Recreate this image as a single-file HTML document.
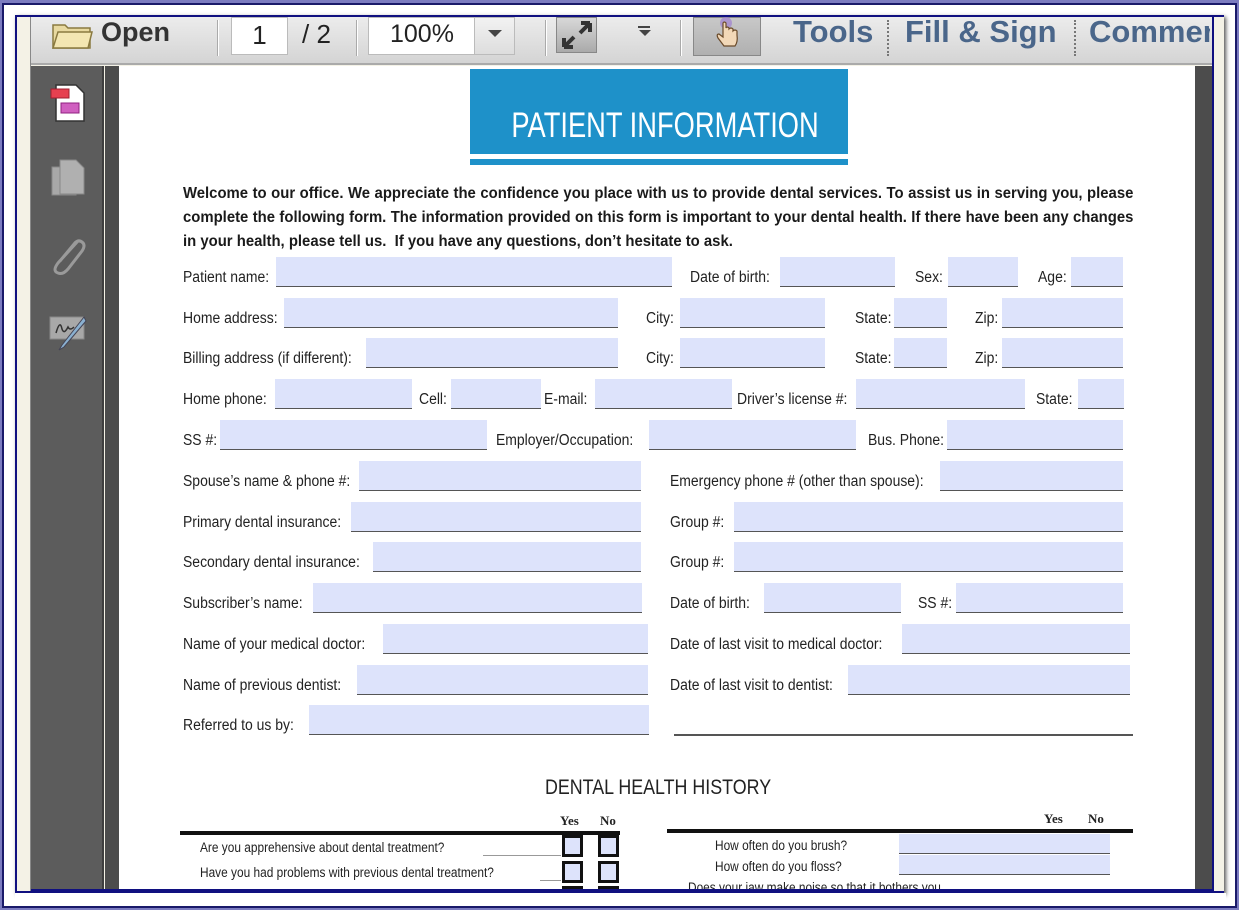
<!DOCTYPE html>
<html><head><meta charset="utf-8"><style>
*{margin:0;padding:0;box-sizing:border-box}
body{width:1239px;height:910px;overflow:hidden;background:#7c7cc0;position:relative;font-family:"Liberation Sans",sans-serif}
.a{position:absolute}
.t{position:absolute;font-size:15.5px;color:#222;white-space:nowrap;transform-origin:0 50%;transform:scaleX(.9);line-height:18px}
.f{position:absolute;background:#dde3fb;border-bottom:1.5px solid #555}
.tb{position:absolute;font-weight:bold;color:#4a668a;font-size:31px;top:14px;white-space:nowrap}
.sep{position:absolute;top:20px;width:2px;height:36px;border-left:1px solid #aaa;border-right:1px solid #fff}
.dsep{position:absolute;top:20px;height:36px;border-left:2px dotted #777}
.p{position:absolute;left:183px;width:990px;font-weight:bold;font-size:15.5px;color:#1a1a1a;text-align:justify;text-align-last:justify;white-space:nowrap;height:20px;line-height:20px;transform-origin:0 50%;transform:scaleX(.96)}
.cb{position:absolute;width:21px;height:22px;border:3px solid #111;background:#dde3fb}
.q{position:absolute;font-size:13.5px;color:#222;white-space:nowrap;transform-origin:0 50%;transform:scaleX(.88)}
</style></head><body>
<div class="a" style="left:2px;top:3px;width:1235px;height:905px;border:2px solid #1a1a6a;background:#fff"></div>
<div class="a" style="left:15px;top:15px;width:1209px;height:878px;border:2px solid #101080;background:#f4f2e6;box-shadow:2px 2px 4px #555"></div>
<!-- toolbar -->
<div class="a" style="left:31px;top:17px;width:1181px;height:48px;background:linear-gradient(#ececec,#d4d4d4);border-bottom:2px solid #aaa"></div>
<svg class="a" style="left:50px;top:17px" width="44" height="34"><path d="M3 8 h12 l3 3 h22 v20 h-37z" fill="#e8d9a0" stroke="#8a7a40" stroke-width="1.5"/><path d="M3 31 l5-16 h34 l-4 16z" fill="#f3e6b2" stroke="#8a7a40" stroke-width="1.5"/></svg>
<div class="a" style="left:101px;top:17px;font-size:27px;font-weight:bold;color:#333">Open</div>
<div class="sep" style="left:217px"></div>
<div class="a" style="left:231px;top:17px;width:57px;height:38px;background:#fff;border:1px solid #bbb;font-size:26px;text-align:center;line-height:34px;color:#222">1</div>
<div class="a" style="left:302px;top:17px;font-size:26px;color:#222;line-height:34px">/&nbsp;2</div>
<div class="sep" style="left:356px"></div>
<div class="a" style="left:368px;top:17px;width:147px;height:38px;background:#fff;border:1px solid #bbb;font-size:25px;line-height:32px;color:#222;padding-left:21px">100%</div>
<div class="a" style="left:474px;top:17px;width:41px;height:38px;background:linear-gradient(#f2f2f2,#ddd);border:1px solid #bbb"></div>
<div class="a" style="left:488px;top:30px;border-left:7px solid transparent;border-right:7px solid transparent;border-top:7px solid #444"></div>
<div class="sep" style="left:545px"></div>
<div class="a" style="left:556px;top:17px;width:41px;height:36px;background:linear-gradient(#d8d8d8,#aaa);border:1px solid #888"></div>
<svg class="a" style="left:560px;top:19px" width="34" height="32"><path d="M4 28 L14 18 M4 28 v-9 M4 28 h9" stroke="#333" stroke-width="4" fill="none"/><path d="M30 4 L20 14 M30 4 v9 M30 4 h-9" stroke="#333" stroke-width="4" fill="none"/></svg>
<div class="a" style="left:638px;top:26px;width:12px;height:2px;background:#444"></div>
<div class="a" style="left:639px;top:30px;border-left:6px solid transparent;border-right:6px solid transparent;border-top:6px solid #444"></div>
<div class="sep" style="left:680px"></div>
<div class="a" style="left:693px;top:17px;width:68px;height:39px;background:linear-gradient(#c8c8c8,#b0b0b0);border:1px solid #888"></div>
<svg class="a" style="left:711px;top:17px" width="32" height="34"><circle cx="15" cy="6" r="6" fill="#a080d0" opacity=".7"/><path d="M12 6 v14 l-4-3 q-3 0 -1 4 l6 8 h11 q3-4 2-11 v-4 q-2-2-4 0 v-2 q-2-2-4 0 v-1 q-2-2-3 0 v-5 q-2-2-3 0z" fill="#f2d8b8" stroke="#6a4a2a" stroke-width="1.2"/></svg>
<div class="tb" style="left:793px">Tools</div>
<div class="dsep" style="left:887px"></div>
<div class="tb" style="left:905px">Fill &amp; Sign</div>
<div class="dsep" style="left:1074px"></div>
<div class="a" style="left:1089px;top:14px;width:121px;overflow:hidden;font-weight:bold;color:#4a668a;font-size:31px;white-space:nowrap">Comment</div>
<!-- side -->
<div class="a" style="left:31px;top:66px;width:73px;height:824px;background:#5c5c5c;border-right:2px solid #3e3e3e"></div>
<div class="a" style="left:105px;top:66px;width:1107px;height:824px;background:#4c4c4c"></div>
<svg class="a" style="left:48px;top:82px" width="42" height="42"><path d="M8 3 h20 l8 8 v28 h-28z" fill="#fff" stroke="#333" stroke-width="1.5"/><rect x="3" y="7" width="18" height="9" fill="#e64050" stroke="#a02030"/><rect x="13" y="21" width="18" height="10" fill="#d060c0" stroke="#902080"/></svg>
<svg class="a" style="left:50px;top:157px" width="38" height="42"><rect x="2" y="10" width="24" height="28" fill="#a8a8a8" stroke="#888"/><path d="M10 3 h16 l8 8 v26 h-24z" fill="#b0b0b0" stroke="#888"/></svg>
<svg class="a" style="left:48px;top:233px" width="40" height="44"><path d="M30 8 L10 30 q-6 8 0 10 q5 2 10-4 L34 18 q4-6 0-9 q-4-3-8 2 L12 28" fill="none" stroke="#9a9a9a" stroke-width="3"/></svg>
<svg class="a" style="left:48px;top:313px" width="44" height="40"><rect x="2" y="4" width="34" height="22" fill="#a8a8a8" stroke="#888"/><path d="M8 20 q4-14 6-4 q2 6 6-2 q2 4 6 0" stroke="#333" fill="none" stroke-width="1.5"/><path d="M36 4 L14 32 l-3 5 5-3 L38 8z" fill="#8ab0d0" stroke="#445"/></svg>
<!-- page -->
<div class="a" style="left:119px;top:66px;width:1076px;height:824px;background:#fff;overflow:hidden">
<div class="a" style="left:351px;top:3px;width:378px;height:85px;background:#1e91c9"></div>
<div class="a" style="left:351px;top:93px;width:378px;height:6px;background:#1e91c9"></div>
<div class="a" style="left:349px;top:40px;width:378px;text-align:center;color:#fff;font-size:35px;white-space:nowrap"><span style="display:inline-block;transform:scaleX(.78)">PATIENT INFORMATION</span></div>
</div>
<div class="p" style="top:184px">Welcome to our office. We appreciate the confidence you place with us to provide dental services. To assist us in serving you, please</div>
<div class="p" style="top:208px">complete the following form. The information provided on this form is important to your dental health. If there have been any changes</div>
<div class="p" style="top:232px;width:auto;text-align:left;text-align-last:left">in your health, please tell us.&nbsp; If you have any questions, don’t hesitate to ask.</div>

<!-- rows -->
<div class="f" style="left:276px;top:257px;width:396px;height:30px"></div><div class="t" style="left:183px;top:269px">Patient name:</div>
<div class="f" style="left:780px;top:257px;width:115px;height:30px"></div><div class="t" style="left:690px;top:269px">Date of birth:</div>
<div class="f" style="left:948px;top:257px;width:70px;height:30px"></div><div class="t" style="left:915px;top:269px">Sex:</div>
<div class="f" style="left:1071px;top:257px;width:52px;height:30px"></div><div class="t" style="left:1038px;top:269px">Age:</div>

<div class="f" style="left:284px;top:298px;width:334px;height:30px"></div><div class="t" style="left:183px;top:310px">Home address:</div>
<div class="f" style="left:680px;top:298px;width:145px;height:30px"></div><div class="t" style="left:646px;top:310px">City:</div>
<div class="f" style="left:894px;top:298px;width:53px;height:30px"></div><div class="t" style="left:855px;top:310px">State:</div>
<div class="f" style="left:1002px;top:298px;width:121px;height:30px"></div><div class="t" style="left:975px;top:310px">Zip:</div>

<div class="f" style="left:366px;top:338px;width:252px;height:30px"></div><div class="t" style="left:183px;top:350px">Billing address (if different):</div>
<div class="f" style="left:680px;top:338px;width:145px;height:30px"></div><div class="t" style="left:646px;top:350px">City:</div>
<div class="f" style="left:894px;top:338px;width:53px;height:30px"></div><div class="t" style="left:855px;top:350px">State:</div>
<div class="f" style="left:1002px;top:338px;width:121px;height:30px"></div><div class="t" style="left:975px;top:350px">Zip:</div>

<div class="f" style="left:275px;top:379px;width:137px;height:30px"></div><div class="t" style="left:183px;top:391px">Home phone:</div>
<div class="f" style="left:451px;top:379px;width:90px;height:30px"></div><div class="t" style="left:419px;top:391px">Cell:</div>
<div class="f" style="left:595px;top:379px;width:137px;height:30px"></div><div class="t" style="left:544px;top:391px">E-mail:</div>
<div class="f" style="left:856px;top:379px;width:169px;height:30px"></div><div class="t" style="left:737px;top:391px">Driver’s license #:</div>
<div class="f" style="left:1078px;top:379px;width:46px;height:30px"></div><div class="t" style="left:1036px;top:391px">State:</div>

<div class="f" style="left:220px;top:420px;width:267px;height:30px"></div><div class="t" style="left:183px;top:432px">SS #:</div>
<div class="f" style="left:649px;top:420px;width:207px;height:30px"></div><div class="t" style="left:496px;top:432px">Employer/Occupation:</div>
<div class="f" style="left:947px;top:420px;width:176px;height:30px"></div><div class="t" style="left:868px;top:432px">Bus. Phone:</div>

<div class="f" style="left:359px;top:461px;width:282px;height:30px"></div><div class="t" style="left:183px;top:473px">Spouse’s name &amp; phone #:</div>
<div class="f" style="left:940px;top:461px;width:183px;height:30px"></div><div class="t" style="left:670px;top:473px">Emergency phone # (other than spouse):</div>

<div class="f" style="left:351px;top:502px;width:290px;height:30px"></div><div class="t" style="left:183px;top:514px">Primary dental insurance:</div>
<div class="f" style="left:734px;top:502px;width:389px;height:30px"></div><div class="t" style="left:670px;top:514px">Group #:</div>

<div class="f" style="left:373px;top:542px;width:268px;height:30px"></div><div class="t" style="left:183px;top:554px">Secondary dental insurance:</div>
<div class="f" style="left:734px;top:542px;width:389px;height:30px"></div><div class="t" style="left:670px;top:554px">Group #:</div>

<div class="f" style="left:313px;top:583px;width:329px;height:30px"></div><div class="t" style="left:183px;top:595px">Subscriber’s name:</div>
<div class="f" style="left:764px;top:583px;width:137px;height:30px"></div><div class="t" style="left:670px;top:595px">Date of birth:</div>
<div class="f" style="left:956px;top:583px;width:167px;height:30px"></div><div class="t" style="left:918px;top:595px">SS #:</div>

<div class="f" style="left:383px;top:624px;width:265px;height:30px"></div><div class="t" style="left:183px;top:636px">Name of your medical doctor:</div>
<div class="f" style="left:902px;top:624px;width:228px;height:30px"></div><div class="t" style="left:670px;top:636px">Date of last visit to medical doctor:</div>

<div class="f" style="left:357px;top:665px;width:291px;height:30px"></div><div class="t" style="left:183px;top:677px">Name of previous dentist:</div>
<div class="f" style="left:848px;top:665px;width:282px;height:30px"></div><div class="t" style="left:670px;top:677px">Date of last visit to dentist:</div>

<div class="f" style="left:309px;top:705px;width:340px;height:30px"></div><div class="t" style="left:183px;top:717px">Referred to us by:</div>
<div class="a" style="left:674px;top:734px;width:459px;height:1.5px;background:#555"></div>

<!-- dental -->
<div class="a" style="left:458px;top:776px;width:400px;text-align:center;font-size:21px;color:#222;white-space:nowrap"><span style="display:inline-block;transform:scaleX(.85)">DENTAL HEALTH HISTORY</span></div>
<div class="a" style="left:560px;top:813px;font-size:13px;font-weight:bold;color:#222;font-family:'Liberation Serif',serif">Yes</div>
<div class="a" style="left:600px;top:813px;font-size:13px;font-weight:bold;color:#222;font-family:'Liberation Serif',serif">No</div>
<div class="a" style="left:180px;top:831px;width:440px;height:4px;background:#111"></div>
<div class="q" style="left:200px;top:840px">Are you apprehensive about dental treatment?</div>
<div class="a" style="left:483px;top:855px;width:78px;height:1px;background:#999"></div>
<div class="q" style="left:200px;top:865px">Have you had problems with previous dental treatment?</div>
<div class="a" style="left:540px;top:880px;width:21px;height:1px;background:#999"></div>
<div class="cb" style="left:562px;top:835px"></div><div class="cb" style="left:598px;top:835px"></div>
<div class="cb" style="left:562px;top:861px"></div><div class="cb" style="left:598px;top:861px"></div>
<div class="cb" style="left:562px;top:886px;height:4px;border-bottom:0"></div><div class="cb" style="left:598px;top:886px;height:4px;border-bottom:0"></div>
<div class="a" style="left:1044px;top:811px;font-size:13px;font-weight:bold;color:#222;font-family:'Liberation Serif',serif">Yes</div>
<div class="a" style="left:1088px;top:811px;font-size:13px;font-weight:bold;color:#222;font-family:'Liberation Serif',serif">No</div>
<div class="a" style="left:667px;top:829px;width:466px;height:4px;background:#111"></div>
<div class="f" style="left:899px;top:834px;width:211px;height:20px;border-bottom-width:1px"></div>
<div class="f" style="left:899px;top:855px;width:211px;height:20px;border-bottom-width:1px"></div>
<div class="q" style="left:715px;top:838px">How often do you brush?</div>
<div class="q" style="left:715px;top:859px">How often do you floss?</div>
<div class="q" style="left:688px;top:880px">Does your jaw make noise so that it bothers you</div>
<!-- bottom frame -->
<div class="a" style="left:17px;top:889px;width:1207px;height:4px;background:#101080"></div>
<div class="a" style="left:15px;top:893px;width:1211px;height:11px;background:#fff"></div>
<div class="a" style="left:1212px;top:17px;width:12px;height:874px;background:#f4f2e6;border-left:2px solid #101080"></div>
<div class="a" style="left:17px;top:17px;width:14px;height:874px;background:#f4f2e6;border-right:1px solid #888"></div>
</body></html>
